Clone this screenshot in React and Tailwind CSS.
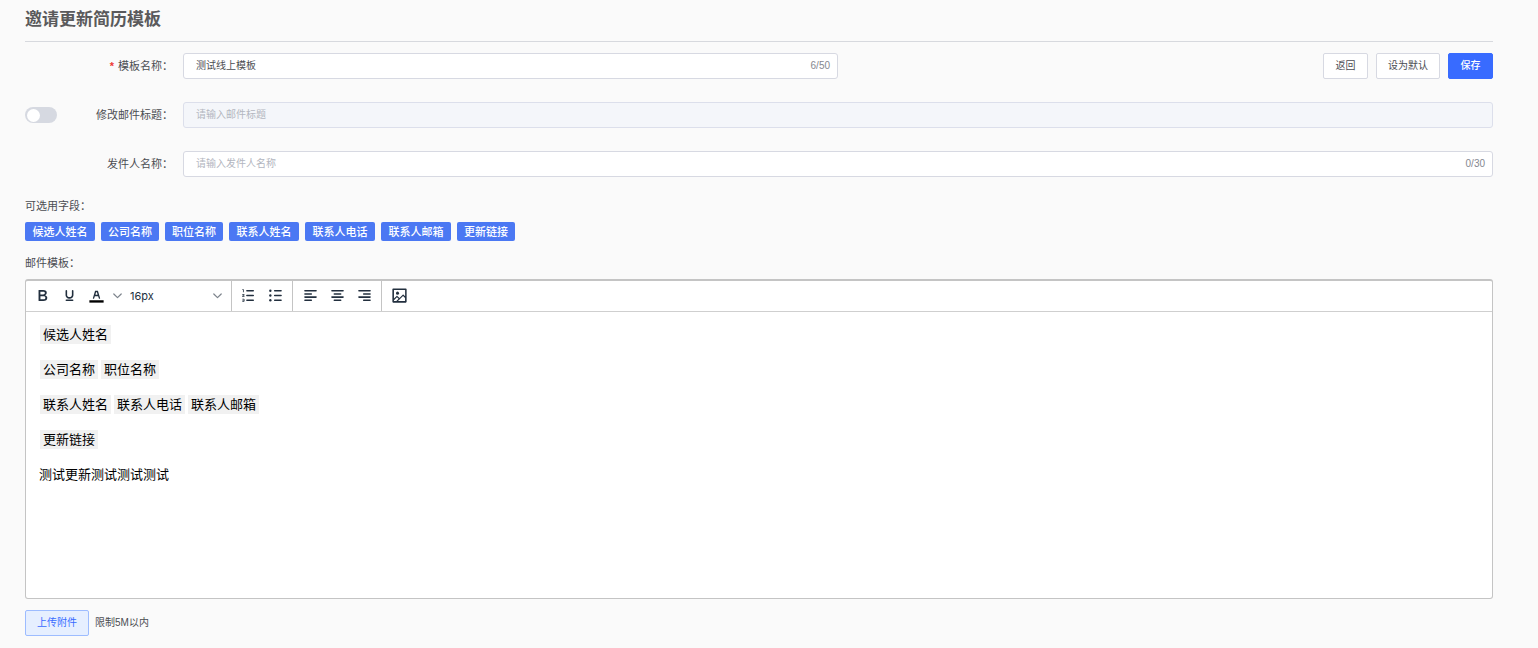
import { useState } from 'react';

const FIELDS = ['候选人姓名', '公司名称', '职位名称', '联系人姓名', '联系人电话', '联系人邮箱', '更新链接'];

const TEMPLATE_LINES = [
  ['候选人姓名'],
  ['公司名称', '职位名称'],
  ['联系人姓名', '联系人电话', '联系人邮箱'],
  ['更新链接'],
];

function Icon({ children }) {
  return (
    <svg className="size-[19px]" viewBox="0 0 24 24" fill="currentColor" aria-hidden="true">
      {children}
    </svg>
  );
}

function Lines({ d }) {
  return <path d={d} fill="none" stroke="currentColor" strokeWidth="2" strokeLinecap="round" />;
}

const BoldIcon = () => (
  <Icon>
    <path d="M7.8 19c-.3 0-.5 0-.6-.2l-.2-.5V5.7c0-.2 0-.4.2-.5l.6-.2h5c1.5 0 2.7.3 3.5 1 .7.6 1.1 1.4 1.1 2.5a3 3 0 0 1-.6 1.9c-.4.6-1 1-1.6 1.2.4.1.9.3 1.3.6s.8.7 1 1.2c.4.4.5 1 .5 1.6 0 1.3-.4 2.3-1.3 3-.8.7-2.1 1-3.8 1H7.8Zm5-8.3c.6 0 1.2-.1 1.6-.5.4-.3.6-.7.6-1.3 0-1.1-.8-1.7-2.3-1.7H9.3v3.5h3.4Zm.5 6c.7 0 1.3-.1 1.7-.4.4-.4.6-.9.6-1.5s-.2-1-.7-1.4c-.4-.3-1-.4-2-.4H9.4v3.8h4Z" />
  </Icon>
);

const UnderlineIcon = () => (
  <Icon>
    <path d="M16 5c.6 0 1 .4 1 1v5.5a4 4 0 0 1-.4 1.8l-1 1.4a5.3 5.3 0 0 1-5.5 1 5 5 0 0 1-1.6-1c-.5-.4-.8-.9-1.1-1.4a4 4 0 0 1-.4-1.8V6c0-.6.4-1 1-1s1 .4 1 1v5.5c0 .3 0 .6.2 1l.6.7a3.3 3.3 0 0 0 2.2.8 3.4 3.4 0 0 0 2.2-.8c.3-.2.4-.5.6-.8l.2-.9V6c0-.6.4-1 1-1ZM8 17h8c.6 0 1 .4 1 1s-.4 1-1 1H8a1 1 0 0 1 0-2Z" />
  </Icon>
);

const TextColorIcon = () => (
  <Icon>
    <path d="M3 18h18v3H3z" fill="#000" />
    <path d="M8.7 16h-.8a.5.5 0 0 1-.5-.6l2.7-9c.1-.3.3-.4.5-.4h2.8c.2 0 .4.1.5.4l2.7 9a.5.5 0 0 1-.5.6h-.8a.5.5 0 0 1-.4-.4l-.7-2.2c0-.3-.3-.4-.5-.4h-3.4c-.2 0-.4.1-.5.4l-.7 2.2c0 .3-.2.4-.4.4Zm2.6-7.6-.6 2a.5.5 0 0 0 .5.6h1.6a.5.5 0 0 0 .5-.6l-.6-2c0-.3-.3-.4-.5-.4h-.4c-.2 0-.4.1-.5.4Z" />
  </Icon>
);

const NumberedListIcon = () => (
  <Icon>
    <path d="M10 17h8c.6 0 1 .4 1 1s-.4 1-1 1h-8a1 1 0 0 1 0-2Zm0-6h8c.6 0 1 .4 1 1s-.4 1-1 1h-8a1 1 0 0 1 0-2Zm0-6h8c.6 0 1 .4 1 1s-.4 1-1 1h-8a1 1 0 1 1 0-2ZM6 4v3.5c0 .3-.2.5-.5.5a.5.5 0 0 1-.5-.5V5h-.5a.5.5 0 0 1 0-1H6Zm-1 8.8.2.2h1.3c.3 0 .5.2.5.5s-.2.5-.5.5H4.9a1 1 0 0 1-.9-1V13c0-.4.3-.8.6-1l1.2-.4.2-.3a.2.2 0 0 0-.2-.2H4.5a.5.5 0 0 1-.5-.5c0-.3.2-.5.5-.5h1.6c.5 0 .9.4.9 1v.1c0 .4-.3.8-.6 1l-1.2.4-.2.3ZM7 17v2c0 .6-.4 1-1 1H4.5a.5.5 0 0 1 0-1h1.2c.2 0 .3-.1.3-.3 0-.2-.1-.3-.3-.3H4.4a.4.4 0 1 1 0-.8h1.3c.2 0 .3-.1.3-.3 0-.2-.1-.3-.3-.3H4.5a.5.5 0 1 1 0-1H6c.6 0 1 .4 1 1Z" />
  </Icon>
);

const BulletListIcon = () => (
  <Icon>
    <Lines d="M11 6h8M11 12h8M11 18h8" />
    <circle cx="5.5" cy="6" r="1.5" />
    <circle cx="5.5" cy="12" r="1.5" />
    <circle cx="5.5" cy="18" r="1.5" />
  </Icon>
);

const AlignLeftIcon = () => (
  <Icon>
    <Lines d="M5 6h14M5 10h8M5 14h14M5 18h8" />
  </Icon>
);

const AlignCenterIcon = () => (
  <Icon>
    <Lines d="M5 6h14M8 10h8M5 14h14M8 18h8" />
  </Icon>
);

const AlignRightIcon = () => (
  <Icon>
    <Lines d="M5 6h14M11 10h8M5 14h14M11 18h8" />
  </Icon>
);

const ImageIcon = () => (
  <Icon>
    <path
      fillRule="evenodd"
      d="m5 15.7 3.3-3.2c.3-.3.7-.3 1 0L12 15l4.1-4c.3-.4.8-.4 1 0l2 1.9V5H5v10.7ZM5 18V19h3l2.8-2.9-2-2L5 17.9Zm14-3-2.5-2.4-6.4 6.5H19v-4ZM4 3h16c.6 0 1 .4 1 1v16c0 .6-.4 1-1 1H4a1 1 0 0 1-1-1V4c0-.6.4-1 1-1Z"
    />
    <circle cx="9.5" cy="9" r="1.9" />
  </Icon>
);

function Chevron() {
  return (
    <svg className="h-[6px] w-[9px] text-[#7d848c]" viewBox="0 0 9 6" fill="none" stroke="currentColor" aria-hidden="true">
      <path d="M.8 1 4.5 4.7 8.2 1" strokeWidth="1.2" strokeLinecap="round" strokeLinejoin="round" />
    </svg>
  );
}

function ToolButton({ label, children }) {
  return (
    <button type="button" aria-label={label} className="flex h-[27px] w-[27px] shrink-0 items-center justify-center rounded-sm hover:bg-slate-100">
      {children}
    </button>
  );
}

function ToolGroup({ last, children }) {
  return (
    <div className={last ? 'flex items-start pt-px pl-1' : 'flex items-start border-r border-[#c4c4c4] pt-px pr-[3px] pl-[3px] nth-3:pl-1'}>
      {children}
    </div>
  );
}

function FormRow({ id, label, required, leading, children }) {
  return (
    <div className="flex items-center">
      <div className="flex w-[158px] shrink-0 items-center justify-between pr-[10px]">
        <span className="flex">{leading}</span>
        <label htmlFor={id} className="text-[11px] leading-4 whitespace-nowrap text-[#4b4d52]">
          {required && <span className="mr-1 font-bold text-[#ee3a34]">*</span>}
          {label}：
        </label>
      </div>
      <div className="flex min-w-0 flex-1 items-center justify-between">{children}</div>
    </div>
  );
}

function TextField({ id, value, onChange, placeholder, max, disabled }) {
  return (
    <div
      className={
        disabled
          ? 'flex h-[26px] w-full items-center rounded-[3px] border border-[#dcdfeb] bg-[#f4f6fa] pr-[7px] pl-3'
          : 'flex h-[26px] w-full items-center rounded-[3px] border border-[#d7d9e2] bg-white pr-[7px] pl-3'
      }
    >
      <input
        id={id}
        type="text"
        value={value}
        disabled={disabled}
        placeholder={placeholder}
        maxLength={max}
        onChange={(e) => onChange(e.target.value)}
        className="min-w-0 flex-1 bg-transparent text-[10px] leading-4 text-[#4b4d52] outline-none placeholder:text-[#b3b6c0]"
      />
      {max && (
        <span className="text-[10px] leading-4 text-[#85888f]">
          {value.length}/{max}
        </span>
      )}
    </div>
  );
}

const plainButton =
  'h-[26px] min-w-[45px] rounded-[2px] border border-[#d7d9e2] bg-white px-[11px] text-[10px] leading-4 text-[#4b4d52]';
const primaryButton =
  'h-[26px] min-w-[45px] rounded-[2px] border border-[#386bff] bg-[#386bff] px-[11px] text-[10px] leading-4 font-medium text-white';

export default function App() {
  const [name, setName] = useState('测试线上模板');
  const [subject, setSubject] = useState('');
  const [sender, setSender] = useState('');
  const [editSubject, setEditSubject] = useState(false);

  return (
    <main className="min-h-screen bg-[#fafafa] pt-2 pr-[45px] pb-3 pl-[25px] font-['Liberation_Sans','Noto_Sans_CJK_SC',sans-serif] text-[#4b4d52]">
      <h1 className="border-b border-[#d7d9de] pb-[9px] text-[17px] leading-6 font-bold text-[#5a5a5c]">邀请更新简历模板</h1>

      <form className="mt-[11px] flex flex-col gap-[23px]" onSubmit={(e) => e.preventDefault()}>
        <FormRow id="template-name" label="模板名称" required>
          <div className="w-1/2">
            <TextField id="template-name" value={name} onChange={setName} max={50} />
          </div>
          <div className="flex gap-2">
            <button type="button" className={plainButton}>返回</button>
            <button type="button" className={plainButton}>设为默认</button>
            <button type="submit" className={primaryButton}>保存</button>
          </div>
        </FormRow>
        <FormRow
          id="mail-subject"
          label="修改邮件标题"
          leading={
            <input
              type="checkbox"
              role="switch"
              aria-label="修改邮件标题"
              checked={editSubject}
              onChange={(e) => setEditSubject(e.target.checked)}
              className="flex h-4 w-8 appearance-none items-center rounded-full bg-[#d6d9e1] px-[2px] before:block before:size-[13px] before:rounded-full before:bg-white checked:bg-[#386bff] checked:before:ml-[15px]"
            />
          }
        >
          <TextField id="mail-subject" value={subject} onChange={setSubject} placeholder="请输入邮件标题" disabled={!editSubject} />
        </FormRow>
        <FormRow id="sender-name" label="发件人名称">
          <TextField id="sender-name" value={sender} onChange={setSender} placeholder="请输入发件人名称" max={30} />
        </FormRow>
      </form>

      <p className="mt-[21px] text-[11px] leading-4">可选用字段：</p>
      <div className="mt-2 flex flex-wrap gap-[6px]">
        {FIELDS.map((field) => (
          <button
            key={field}
            type="button"
            className={
              field.length > 4
                ? 'h-[19px] min-w-[70px] rounded-[2px] bg-[#4b78f3] px-[7px] text-[11px] leading-4 font-medium text-white'
                : 'h-[19px] min-w-[58px] rounded-[2px] bg-[#4b78f3] px-[7px] text-[11px] leading-4 font-medium text-white'
            }
          >
            {field}
          </button>
        ))}
      </div>

      <p id="template-label" className="mt-[14px] text-[11px] leading-4">邮件模板：</p>
      <section className="mt-2 rounded-[3px] border border-t-2 border-[#c4c4c4] bg-white">
        <div role="toolbar" aria-label="格式" className="flex h-[31px] border-b border-[#cfcfcf] text-[#222f3e]">
          <ToolGroup>
            <ToolButton label="粗体"><BoldIcon /></ToolButton>
            <ToolButton label="下划线"><UnderlineIcon /></ToolButton>
            <ToolButton label="文字颜色"><TextColorIcon /></ToolButton>
            <button type="button" aria-label="选择文字颜色" className="flex h-[27px] w-[14px] items-center justify-center">
              <Chevron />
            </button>
            <div className="grid w-[104px] items-center">
              <select
                aria-label="字号"
                defaultValue="16px"
                className="col-start-1 row-start-1 h-[27px] w-full appearance-none bg-transparent pl-[6px] font-['Inter',sans-serif] text-[11px] leading-4 outline-none"
              >
                <option>12px</option>
                <option>14px</option>
                <option>16px</option>
                <option>18px</option>
              </select>
              <span className="pointer-events-none col-start-1 row-start-1 justify-self-end pr-[6px]">
                <Chevron />
              </span>
            </div>
          </ToolGroup>
          <ToolGroup>
            <ToolButton label="编号列表"><NumberedListIcon /></ToolButton>
            <ToolButton label="项目列表"><BulletListIcon /></ToolButton>
          </ToolGroup>
          <ToolGroup>
            <ToolButton label="左对齐"><AlignLeftIcon /></ToolButton>
            <ToolButton label="居中"><AlignCenterIcon /></ToolButton>
            <ToolButton label="右对齐"><AlignRightIcon /></ToolButton>
          </ToolGroup>
          <ToolGroup last>
            <ToolButton label="插入图片"><ImageIcon /></ToolButton>
          </ToolGroup>
        </div>
        <div
          role="textbox"
          aria-multiline="true"
          aria-labelledby="template-label"
          contentEditable
          suppressContentEditableWarning
          className="flex min-h-[286px] flex-col gap-4 px-[13px] py-[13px] text-[13px] leading-[19px] text-black outline-none"
        >
          {TEMPLATE_LINES.map((line) => (
            <p key={line[0]} className="flex gap-[3px] pl-px">
              {line.map((field) => (
                <span key={field} className="bg-[#f1f1f1] px-[3px]">{field}</span>
              ))}
            </p>
          ))}
          <p>测试更新测试测试测试</p>
        </div>
      </section>

      <div className="mt-[11px] flex items-center gap-[6px]">
        <button
          type="button"
          className="h-[26px] rounded-[2px] border border-[#9dbcff] bg-[#e6efff] px-[11px] text-[10px] leading-4 text-[#386bff]"
        >
          上传附件
        </button>
        <span className="text-[10px] leading-4">限制5M以内</span>
      </div>
    </main>
  );
}
